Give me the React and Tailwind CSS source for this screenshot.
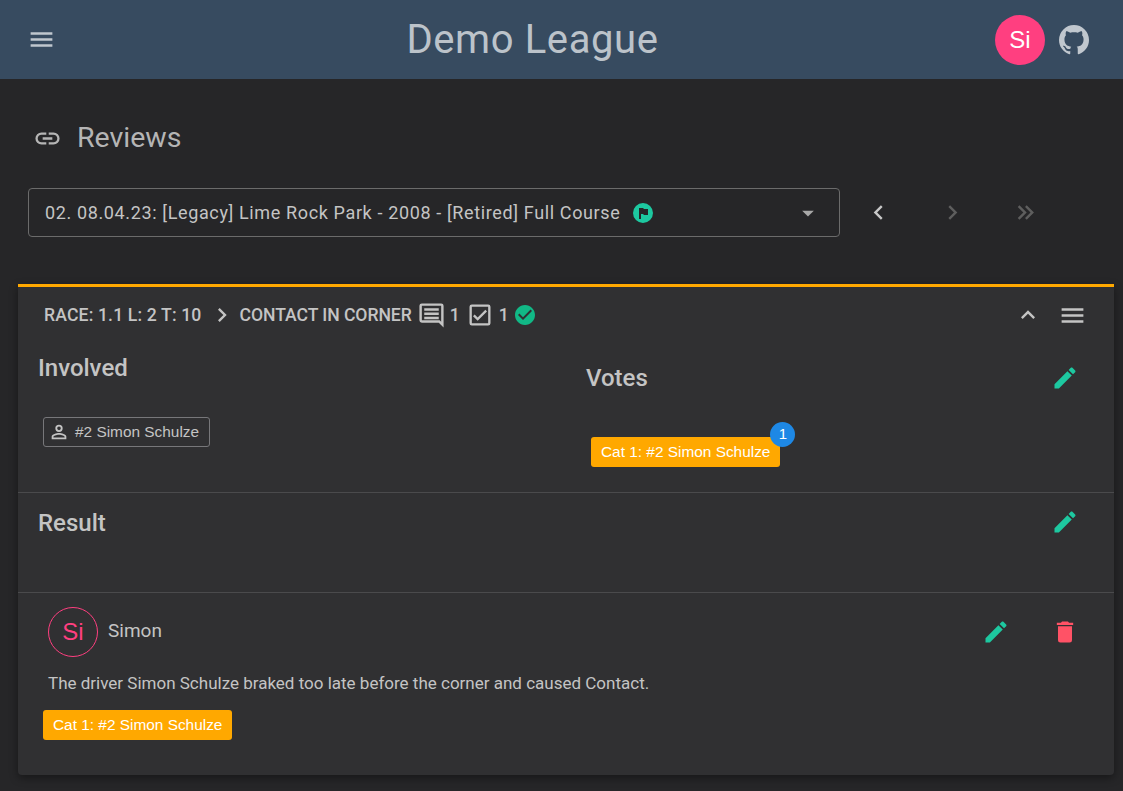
import React from 'react'

const Icon = ({ d, className }) => (
  <svg viewBox="0 0 24 24" className={className} fill="currentColor">
    <path d={d} />
  </svg>
)

const mdi = {
  menu: 'M3,6H21V8H3V6M3,11H21V13H3V11M3,16H21V18H3V16Z',
  link: 'M3.9,12C3.9,10.29 5.29,8.9 7,8.9H11V7H7A5,5 0 0,0 2,12A5,5 0 0,0 7,17H11V15.1H7C5.29,15.1 3.9,13.71 3.9,12M8,13H16V11H8V13M17,7H13V8.9H17C18.71,8.9 20.1,10.29 20.1,12C20.1,13.71 18.71,15.1 17,15.1H13V17H17A5,5 0 0,0 22,12A5,5 0 0,0 17,7Z',
  github: 'M12,2A10,10 0 0,0 2,12C2,16.42 4.87,20.17 8.84,21.5C9.34,21.58 9.5,21.27 9.5,21C9.5,20.77 9.5,20.14 9.5,19.31C6.73,19.91 6.14,17.97 6.14,17.97C5.68,16.81 5.03,16.5 5.03,16.5C4.12,15.88 5.1,15.9 5.1,15.9C6.1,15.97 6.63,16.93 6.63,16.93C7.5,18.45 8.97,18 9.54,17.76C9.63,17.11 9.89,16.67 10.17,16.42C7.95,16.17 5.62,15.31 5.62,11.5C5.62,10.39 6,9.5 6.65,8.79C6.55,8.54 6.2,7.5 6.75,6.15C6.75,6.15 7.59,5.88 9.5,7.17C10.29,6.95 11.15,6.84 12,6.84C12.85,6.84 13.71,6.95 14.5,7.17C16.41,5.88 17.25,6.15 17.25,6.15C17.8,7.5 17.45,8.54 17.35,8.79C18,9.5 18.38,10.39 18.38,11.5C18.38,15.32 16.04,16.16 13.81,16.41C14.17,16.72 14.5,17.33 14.5,18.26C14.5,19.6 14.5,20.68 14.5,21C14.5,21.27 14.66,21.59 15.17,21.5C19.14,20.16 22,16.42 22,12A10,10 0 0,0 12,2Z',
  pencil: 'M20.71,7.04C21.1,6.65 21.1,6 20.71,5.63L18.37,3.29C18,2.9 17.35,2.9 16.96,3.29L15.12,5.12L18.87,8.87M3,17.25V21H6.75L17.81,9.93L14.06,6.18L3,17.25Z',
  trash: 'M19,4H15.5L14.5,3H9.5L8.5,4H5V6H19M6,19A2,2 0 0,0 8,21H16A2,2 0 0,0 18,19V7H6V19Z',
  chevronLeft: 'M15.41,16.58L10.83,12L15.41,7.41L14,6L8,12L14,18L15.41,16.58Z',
  chevronRight: 'M8.59,16.58L13.17,12L8.59,7.41L10,6L16,12L10,18L8.59,16.58Z',
  chevronDoubleRight: 'M5.59,7.41L7,6L13,12L7,18L5.59,16.59L10.17,12L5.59,7.41M11.59,7.41L13,6L19,12L13,18L11.59,16.59L16.17,12L11.59,7.41Z',
  chevronUp: 'M7.41,15.41L12,10.83L16.59,15.41L18,14L12,8L6,14L7.41,15.41Z',
  menuDown: 'M7,10L12,15L17,10H7Z',
  checkCircle: 'M12 2C6.5 2 2 6.5 2 12S6.5 22 12 22 22 17.5 22 12 17.5 2 12 2M10 17L5 12L6.41 10.59L10 14.17L17.59 6.58L19 8L10 17Z',
  comment: 'M6,6H18V8H6V6M6,9.5H18V11.5H6V9.5M6,13H18V15H6V13M22,4V22L18,18H4A2,2 0 0,1 2,16V4A2,2 0 0,1 4,2H20A2,2 0 0,1 22,4M20,4H4V16H18.83L20,17.17V4Z',
  check: 'M19,3H5A2,2 0 0,0 3,5V19A2,2 0 0,0 5,21H19A2,2 0 0,0 21,19V5A2,2 0 0,0 19,3M19,5V19H5V5H19M10,17L6,13L7.41,11.59L10,14.17L16.59,7.58L18,9L10,17Z',
  account: 'M12,4A4,4 0 0,1 16,8A4,4 0 0,1 12,12A4,4 0 0,1 8,8A4,4 0 0,1 12,4M12,6A2,2 0 0,0 10,8A2,2 0 0,0 12,10A2,2 0 0,0 14,8A2,2 0 0,0 12,6M12,13C14.67,13 20,14.33 20,17V20H4V17C4,14.33 9.33,13 12,13M12,14.9C9.03,14.9 5.9,16.36 5.9,17V18.1H18.1V17C18.1,16.36 14.97,14.9 12,14.9Z',
  flagCircle: 'M12 2A10 10 0 1 0 12 22A10 10 0 1 0 12 2M8 7H12L13 8H17V14H13L12 13H10V18H8V7Z',
}

const sans = "font-['Liberation_Sans',Arial,sans-serif]"

const VoteChip = ({ children }) => (
  <span className={`inline-flex h-[30px] items-center rounded-[3px] bg-[#ffa800] px-[10px] text-[15.4px] text-white ${sans}`}>
    {children}
  </span>
)

export default function App() {
  return (
    <div className="h-[791px] overflow-hidden bg-[#262628] font-['Roboto',sans-serif] text-[#c4c4c4]">
      {/* App bar */}
      <header className="flex h-[79px] items-center bg-[#374b60] pl-[27px] pr-[31px]">
        <Icon d={mdi.menu} className="h-[29px] w-[29px] text-[#c0c7ce]" />
        <h1 className="flex-1 pl-[14px] text-center text-[40px] leading-none font-normal tracking-[0.6px] text-[#bcc3ca]">Demo League</h1>
        <div className={`flex h-[50px] w-[50px] items-center justify-center rounded-full bg-[#ff3f80] text-[24px] text-white ${sans}`}>Si</div>
        <Icon d={mdi.github} className="ml-[11px] h-[36px] w-[36px] text-[#c0c7ce]" />
      </header>

      <main className="px-[18px]">
        <div className="mt-[41px] flex h-[36px] items-center pl-[15px] text-[#b5b5b5]">
          <Icon d={mdi.link} className="h-[29px] w-[29px]" />
          <h2 className="ml-[15px] text-[28.5px] leading-none font-normal">Reviews</h2>
        </div>

        {/* Race selector */}
        <div className="mt-[32px] flex items-center pl-[10px]">
          <div className="flex h-[49px] w-[812px] items-center rounded-[4px] border border-[#6b6b6b] pr-[17px] pl-[16px]">
            <span className="text-[18px] tracking-[0.63px]">02. 08.04.23: [Legacy] Lime Rock Park - 2008 - [Retired] Full Course</span>
            <Icon d={mdi.flagCircle} className="ml-[11px] h-6 w-6 text-[#1dc8a0]" />
            <Icon d={mdi.menuDown} className="ml-auto h-[28px] w-[28px] text-[#a8a8a8]" />
          </div>
          <Icon d={mdi.chevronLeft} className="ml-[24px] h-[29px] w-[29px] text-[#c8c8c8]" />
          <Icon d={mdi.chevronRight} className="ml-[45px] h-[29px] w-[29px] text-[#5e5e5e]" />
          <Icon d={mdi.chevronDoubleRight} className="ml-[44px] h-[29px] w-[29px] text-[#5e5e5e]" />
        </div>

        {/* Review card */}
        <section className="mt-[47px] h-[491px] w-[1096px] rounded-b-[4px] border-t-[3px] border-[#ffa800] bg-[#303032] shadow-[0_3px_8px_rgba(0,0,0,0.4)]">
          <div className="flex h-[56px] items-center pr-[27px] pl-[26px] text-[17.6px] font-medium">
            <span className="tracking-[0.15px]">RACE: 1.1 L: 2 T: 10</span>
            <Icon d={mdi.chevronRight} className="ml-[6px] h-[28px] w-[28px]" />
            <span className="ml-[4px] tracking-[-0.06px]">CONTACT IN CORNER</span>
            <Icon d={mdi.comment} className="ml-[5px] h-[29px] w-[29px]" />
            <span className="ml-[4px]">1</span>
            <Icon d={mdi.check} className="ml-[6px] h-[28px] w-[28px]" />
            <span className="ml-[5px]">1</span>
            <Icon d={mdi.checkCircle} className="ml-[4px] h-6 w-6 text-[#11b886]" />
            <Icon d={mdi.chevronUp} className="ml-auto h-[28px] w-[28px]" />
            <Icon d={mdi.menu} className="ml-[16px] h-[29px] w-[29px]" />
          </div>

          <div className="flex h-[150px] border-b border-[#4a4a4c]">
            <div className="w-[548px] pl-[20px]">
              <h3 className="mt-[11px] text-[24px] leading-[28px] font-medium">Involved</h3>
              <div className={`mt-[35px] ml-[5px] inline-flex h-[30px] items-center rounded-[3px] border border-[#77777a] pr-[10px] pl-[4px] text-[15.4px] ${sans}`}>
                <Icon d={mdi.account} className="h-[22px] w-[22px]" />
                <span className="ml-[5px]">#2 Simon Schulze</span>
              </div>
            </div>
            <div className="flex-1 pr-[35px] pl-[20px]">
              <div className="mt-[21px] flex items-center justify-between">
                <h3 className="text-[24px] leading-[28px] font-medium">Votes</h3>
                <Icon d={mdi.pencil} className="h-[28px] w-[28px] text-[#1dc8a0]" />
              </div>
              <div className="relative mt-[45px] ml-[5px] inline-block">
                <VoteChip>Cat 1: #2 Simon Schulze</VoteChip>
                <span className={`absolute -top-[15px] -right-[15px] flex h-[25px] w-[25px] items-center justify-center rounded-full bg-[#1e88e5] text-[15px] text-white ${sans}`}>1</span>
              </div>
            </div>
          </div>

          <div className="flex h-[100px] justify-between border-b border-[#4a4a4c] pr-[35px] pl-[20px]">
            <h3 className="mt-[16px] text-[24px] leading-[28px] font-medium">Result</h3>
            <Icon d={mdi.pencil} className="mt-[15px] h-[28px] w-[28px] text-[#1dc8a0]" />
          </div>

          <div className="pr-[35px] pl-[25px]">
            <div className="flex items-center pt-[14px] pl-[5px]">
              <div className={`flex h-[50px] w-[50px] items-center justify-center rounded-full border border-[#ff3f80] text-[24px] text-[#ff3f80] ${sans}`}>Si</div>
              <span className="ml-[10px] -translate-y-px text-[19px]">Simon</span>
              <Icon d={mdi.pencil} className="ml-auto h-[28px] w-[28px] text-[#1dc8a0]" />
              <Icon d={mdi.trash} className="ml-[41px] h-[28px] w-[28px] text-[#ff5266]" />
            </div>
            <p className="mt-[14px] pl-[5px] text-[17px] leading-[24px]">The driver Simon Schulze braked too late before the corner and caused Contact.</p>
            <div className="mt-[15px]">
              <VoteChip>Cat 1: #2 Simon Schulze</VoteChip>
            </div>
          </div>
        </section>
      </main>
    </div>
  )
}
